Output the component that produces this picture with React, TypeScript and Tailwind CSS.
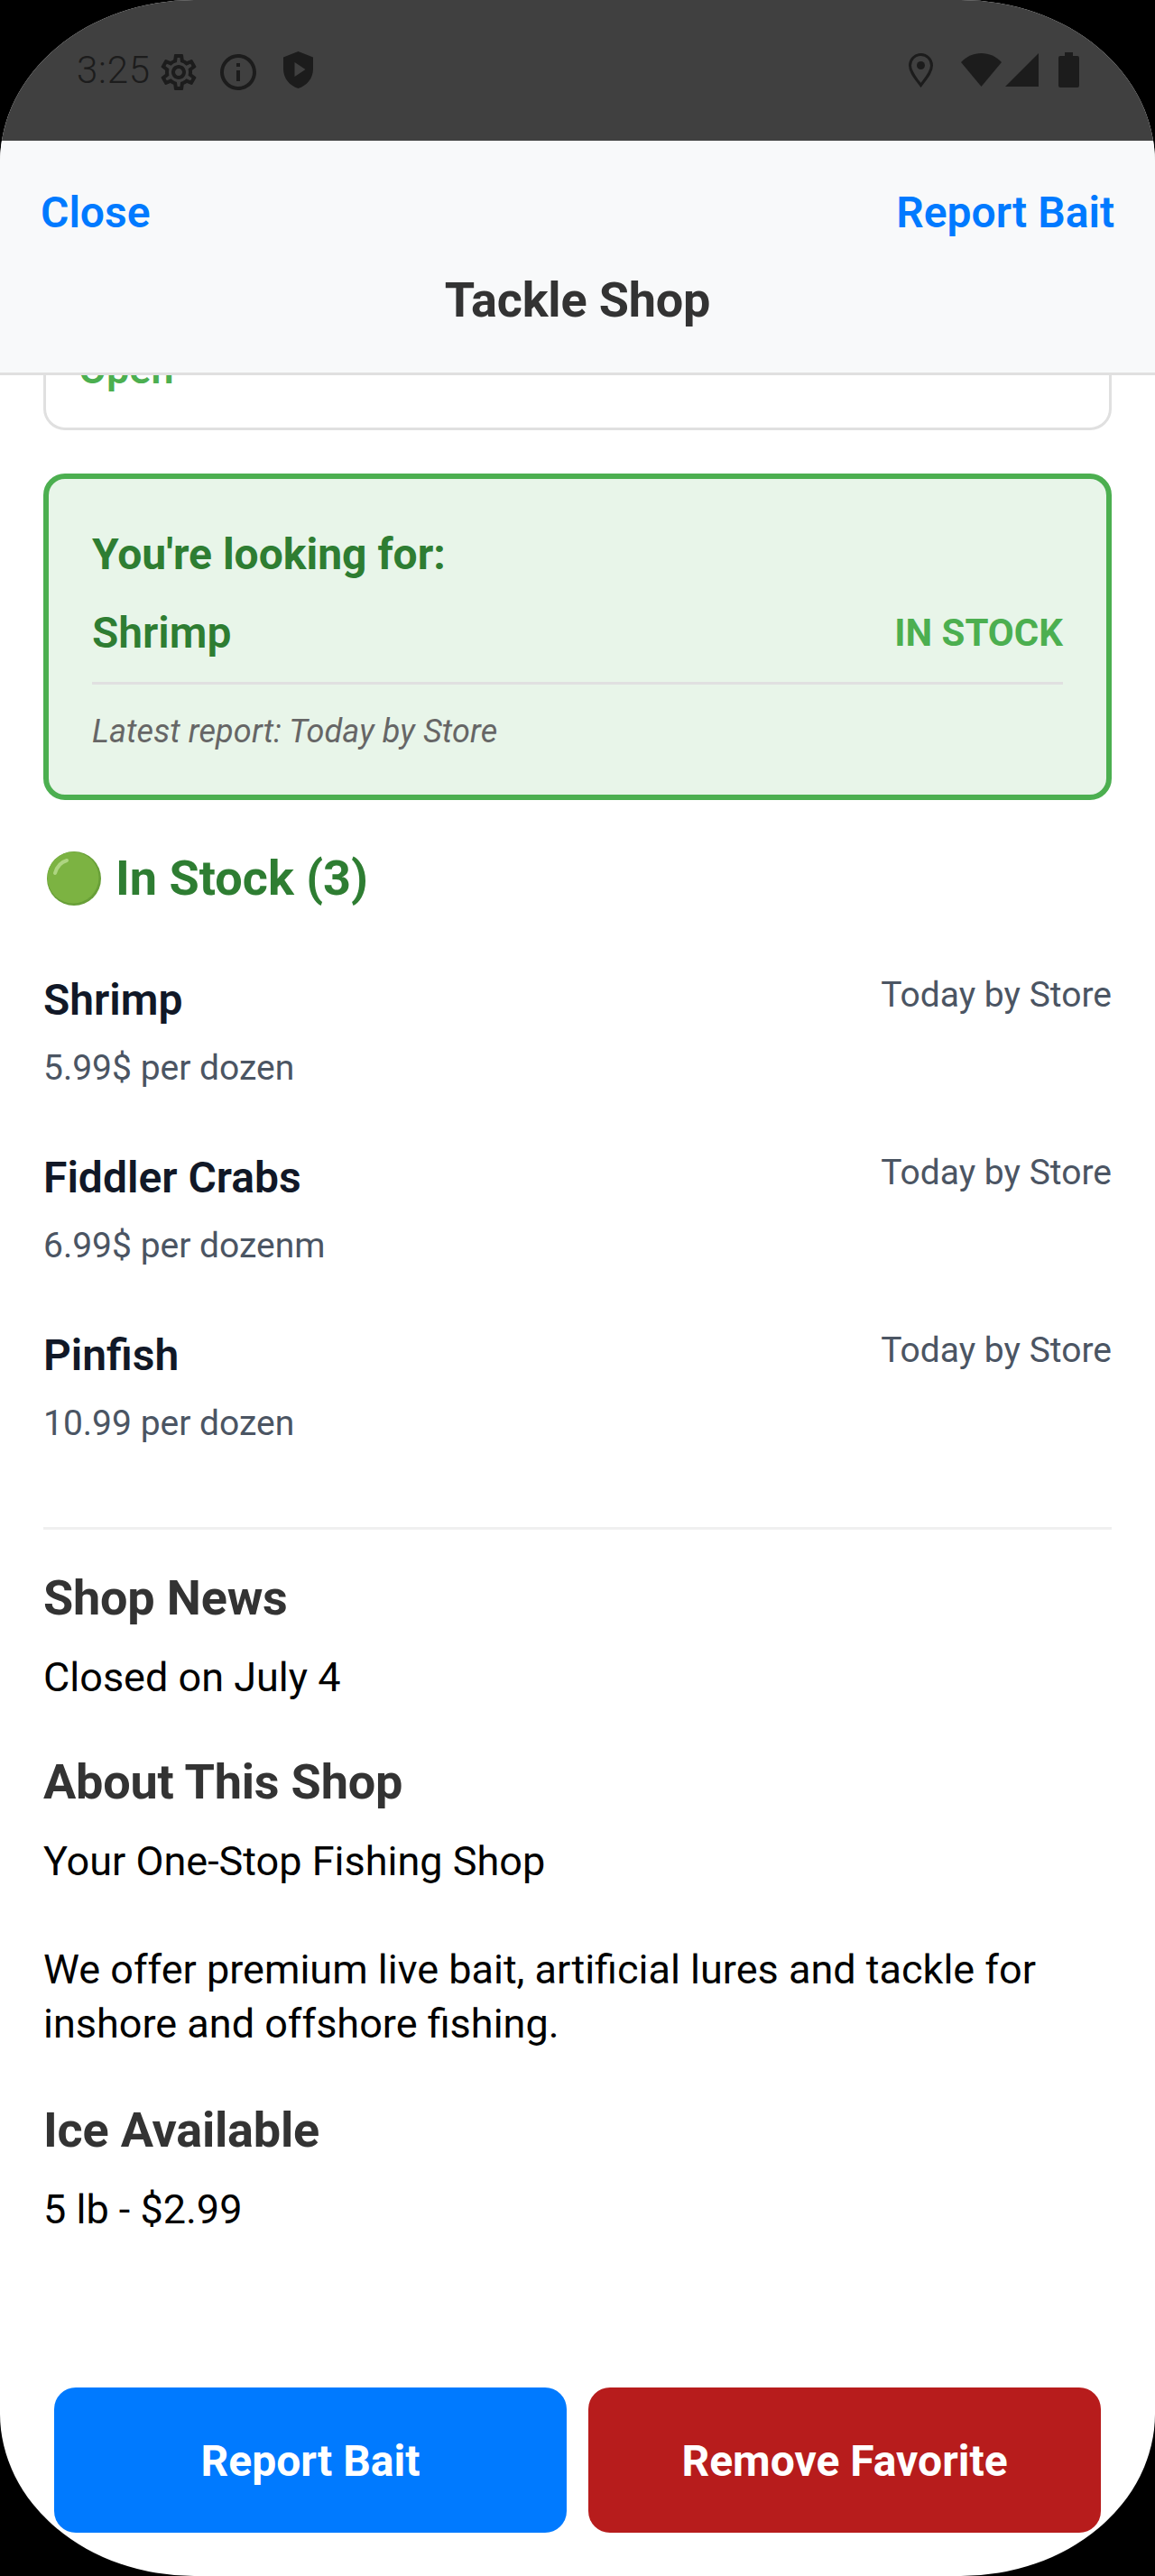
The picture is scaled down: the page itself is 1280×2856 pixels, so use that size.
import React from "react";
import { MdOutlineSettings, MdInfoOutline } from "react-icons/md";

const items = [
  { name: "Shrimp", price: "5.99$ per dozen" },
  { name: "Fiddler Crabs", price: "6.99$ per dozenm" },
  { name: "Pinfish", price: "10.99 per dozen" },
];

function StatusBar() {
  return (
    <div className="h-[156px] shrink-0 bg-[#404040] flex justify-between pl-[85px] pr-[84px] pt-[57px] text-[#1c1c1c]">
      <div className="flex items-start h-[42px]">
        <span className="text-[42px] leading-[42px] font-light w-[90px] tracking-[0.8px]">3:25</span>
        <MdOutlineSettings className="w-[48px] h-[48px] -ml-[1px] -mt-[1px]" />
        <MdInfoOutline className="w-[48px] h-[48px] ml-[18px] -mt-[1px]" />
        <svg viewBox="0 0 33 41" className="w-[33px] h-[41px] ml-[26px]" fill="currentColor">
          <path fillRule="evenodd" d="M16.5 0 33 6.5v13C33 30 26 38 16.5 41 7 38 0 30 0 19.5v-13ZM12.5 12v16l12-8Z" />
        </svg>
      </div>
      <div className="flex items-start h-[42px]">
        <svg viewBox="0 0 27 38" className="w-[27px] h-[38px] mt-[2px]" fill="none" stroke="currentColor" strokeWidth="3">
          <path d="M13.5 35.5C8 28 1.5 21 1.5 13.5a12 12 0 0 1 24 0C25.5 21 19 28 13.5 35.5Z" />
          <circle cx="13.5" cy="13.5" r="4.5" fill="currentColor" stroke="none" />
        </svg>
        <svg viewBox="0 0 45 37" className="w-[45px] h-[37px] ml-[31px] mt-[2px]" fill="currentColor">
          <path d="M0 10C6 3.500 14 0 22.500 0S39 3.500 45 10L22.500 37Z" />
        </svg>
        <svg viewBox="0 0 37 37" className="w-[37px] h-[37px] ml-[4px] mt-[2px]" fill="currentColor">
          <path d="M37 0v37H0Z" />
        </svg>
        <svg viewBox="0 0 23 39" className="w-[23px] h-[39px] ml-[22px] mt-[1px]" fill="currentColor">
          <path d="M7 0h9v4h5a2 2 0 0 1 2 2v31a2 2 0 0 1-2 2H2a2 2 0 0 1-2-2V6a2 2 0 0 1 2-2h5Z" />
        </svg>
      </div>
    </div>
  );
}

function GreenDot() {
  return (
    <svg viewBox="0 0 60 60" className="w-[60px] h-[60px] shrink-0 ml-[4px]">
      <circle cx="30" cy="30" r="30" fill="#689f38" />
      <circle cx="29" cy="29" r="28.500" fill="#7cb342" />
      <path d="M9 24C11 17 15 12 22 10" fill="none" stroke="#aed581" strokeWidth="4" strokeLinecap="round" />
    </svg>
  );
}

function Heading({ children }: { children: React.ReactNode }) {
  return <h2 className="text-[54px] leading-[63px] font-bold text-[#333333] tracking-[-0.2px]">{children}</h2>;
}

export default function App() {
  return (
    <div className="h-[2856px] w-[1280px] bg-black font-['Roboto',sans-serif]">
      <div className="h-full w-full bg-white flex flex-col overflow-hidden rounded-[215px/180px]">
        <StatusBar />
        <header className="shrink-0 h-[260px] bg-[#f8f9fa] border-b-[3px] border-[#e0e0e0] px-[45px] pt-[52px] relative z-10">
          <div className="flex justify-between text-[48px] leading-[56px] font-semibold text-[#007aff]">
            <span>Close</span>
            <span>Report Bait</span>
          </div>
          <h1 className="mt-[37px] text-center text-[54px] leading-[63px] font-bold text-[#333333] tracking-[-0.2px]">Tackle Shop</h1>
        </header>
        <main className="flex-1 min-h-0 overflow-hidden px-[48px]">
          <div className="-mt-[61px] h-[122px] border-[3px] border-[#e0e0e0] rounded-[24px] px-[36px] pt-[22px] text-[45px] leading-[60px] font-semibold text-[#4caf50]">
            Open
          </div>
          <section className="mt-[48px] h-[362px] border-[6px] border-[#4caf50] bg-[#e8f5e9] rounded-[24px] px-[48px] pt-[56px]">
            <div className="text-[48px] leading-[56px] font-bold text-[#2e7d32]">You're looking for:</div>
            <div className="mt-[31px] flex justify-between items-center pb-[26px] border-b-[3px] border-[#e0e0e0]">
              <span className="text-[48px] leading-[56px] font-semibold text-[#2e7d32]">Shrimp</span>
              <span className="text-[42px] leading-[56px] font-bold text-[#4caf50]">IN STOCK</span>
            </div>
            <div className="mt-[31px] text-[36px] leading-[42px] italic text-[#666666] tracking-[0.12px]">Latest report: Today by Store</div>
          </section>
          <div className="mt-[55px] flex items-center gap-[16px] text-[54px] leading-[63px] font-bold text-[#2e7d32]">
            <GreenDot />
            <span>In Stock (3)</span>
          </div>
          <ul className="mt-[76px]">
            {items.map((it) => (
              <li key={it.name} className="h-[197px] flex justify-between items-start">
                <div>
                  <div className="text-[48px] leading-[56px] font-semibold text-[#111827]">{it.name}</div>
                  <div className="mt-[24px] text-[39px] leading-[46px] text-[#4b5563]">{it.price}</div>
                </div>
                <span className="-mt-[1px] text-[39px] leading-[46px] text-[#4b5563]">Today by Store</span>
              </li>
            ))}
          </ul>
          <div className="border-t-[3px] border-[#f0f0f0] mt-[21px] pt-[44px]">
            <Heading>Shop News</Heading>
            <p className="mt-[27px] text-[45px] leading-[60px] text-black">Closed on July 4</p>
            <div className="mt-[54px]"><Heading>About This Shop</Heading></div>
            <p className="mt-[27px] text-[45px] leading-[60px] text-black">
              Your One-Stop Fishing Shop
              <br />
              <br />
              We offer premium live bait, artificial lures and tackle for inshore and offshore fishing.
            </p>
            <div className="mt-[56px]"><Heading>Ice Available</Heading></div>
            <p className="mt-[27px] text-[45px] leading-[60px] text-black">5 lb - $2.99</p>
          </div>
        </main>
        <footer className="shrink-0 flex gap-[24px] px-[60px] pb-[48px] text-[48px] font-bold text-white">
          <button className="flex-1 h-[161px] pt-[2px] rounded-[24px] bg-[#007aff]">Report Bait</button>
          <button className="flex-1 h-[161px] pt-[2px] rounded-[24px] bg-[#b71c1c]">Remove Favorite</button>
        </footer>
      </div>
    </div>
  );
}
